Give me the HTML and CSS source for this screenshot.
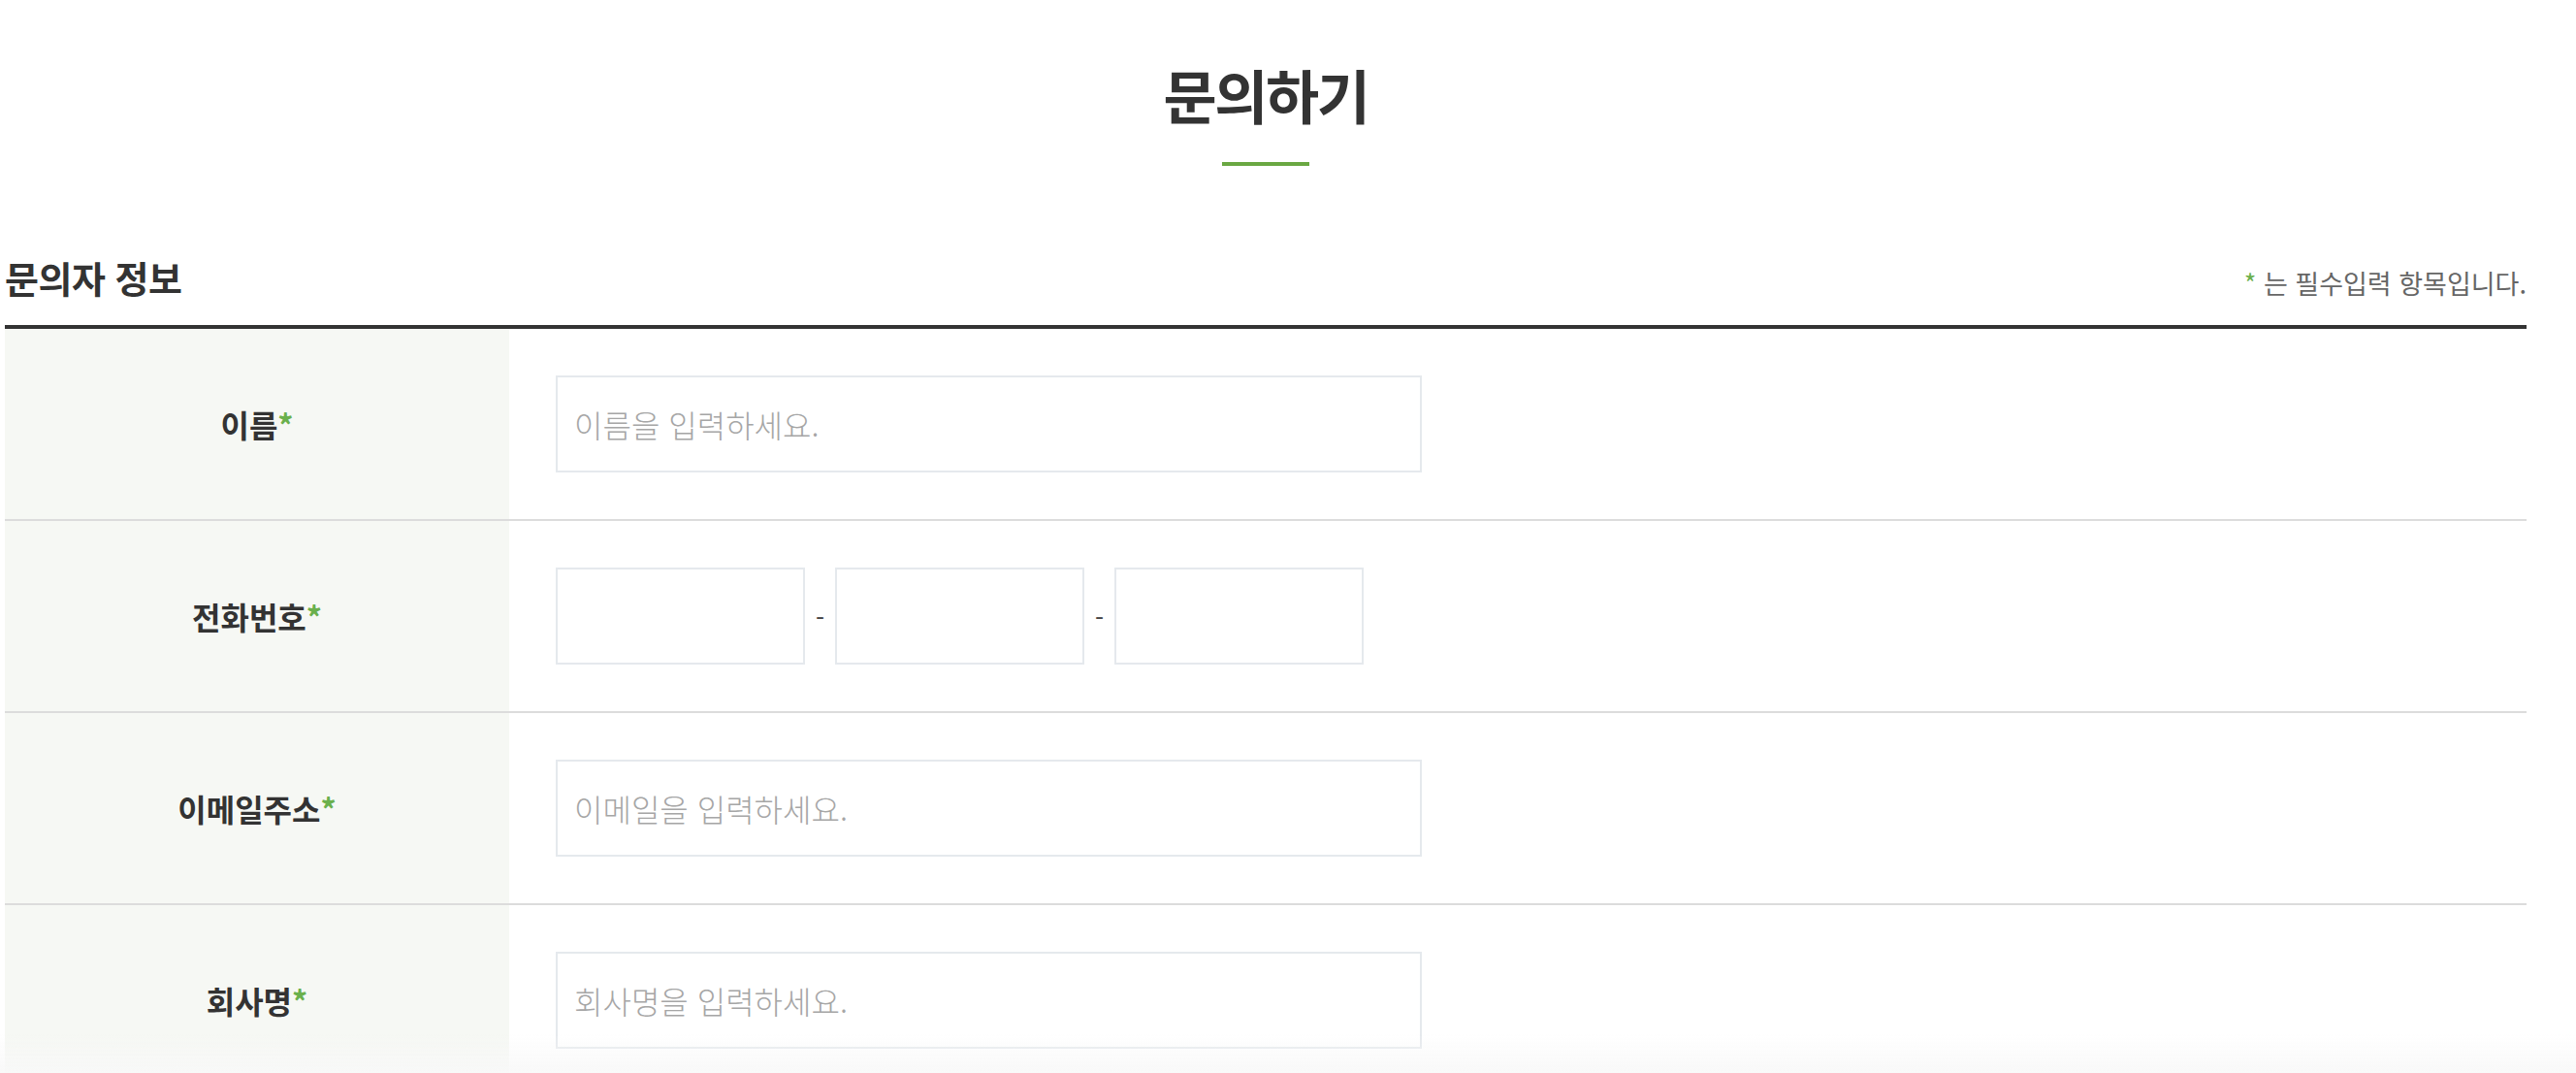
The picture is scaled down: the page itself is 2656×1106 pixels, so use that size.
FILE: index.html
```html
<!DOCTYPE html>
<html lang="ko">
<head>
<meta charset="utf-8">
<title>문의하기</title>
<link rel="stylesheet" href="styles.css">
</head>
<body>
<div class="wrap">
  <h1 class="page-title">문의하기</h1>
  <div class="title-bar"></div>

  <div class="section-head">
    <h2 class="section-title">문의자 정보</h2>
    <p class="req-note"><span class="star">*</span> 는 필수입력 항목입니다.</p>
  </div>

  <div class="form-table">
    <div class="row">
      <div class="label">이름<span class="star">*</span></div>
      <div class="field"><input class="text-input" type="text" placeholder="이름을 입력하세요."></div>
    </div>
    <div class="row">
      <div class="label">전화번호<span class="star">*</span></div>
      <div class="field">
        <input class="phone-input" type="text">
        <span class="dash">-</span>
        <input class="phone-input" type="text">
        <span class="dash">-</span>
        <input class="phone-input" type="text">
      </div>
    </div>
    <div class="row">
      <div class="label">이메일주소<span class="star">*</span></div>
      <div class="field"><input class="text-input" type="text" placeholder="이메일을 입력하세요."></div>
    </div>
    <div class="row">
      <div class="label">회사명<span class="star">*</span></div>
      <div class="field"><input class="text-input" type="text" placeholder="회사명을 입력하세요."></div>
    </div>
  </div>
</div>
<div class="bottom-fade"></div>
</body>
</html>
```

FILE: styles.css
```css
* { box-sizing: border-box; }

body {
  margin: 0;
  background: #ffffff;
  color: #333333;
  font-family: "Noto Sans CJK KR", "Noto Sans", sans-serif;
}

.wrap {
  width: 2600px;
  margin-left: 5px;
  padding-top: 67px;
}

.page-title {
  margin: 0;
  font-size: 60px;
  line-height: 60px;
  font-weight: 700;
  text-align: center;
  letter-spacing: -2.5px;
  color: #333333;
}

.title-bar {
  width: 90px;
  height: 4px;
  margin: 40px auto 0;
  background: #6aa842;
}

.section-head {
  display: flex;
  justify-content: space-between;
  align-items: flex-end;
  margin-top: 96px;
  padding-bottom: 30px;
  border-bottom: 4px solid #333333;
}

.section-title {
  margin: 0;
  font-size: 38px;
  line-height: 38px;
  font-weight: 700;
  letter-spacing: -0.5px;
  color: #333333;
}

.req-note {
  margin: 0;
  padding-right: 0;
  font-size: 27px;
  line-height: 27px;
  font-weight: 400;
  letter-spacing: 0;
  color: #666666;
}

.star { color: #6ab04c; }

.row {
  display: grid;
  grid-template-columns: 520px 1fr;
  height: 198px;
  border-bottom: 2px solid #dcdcdc;
}

.label {
  display: flex;
  align-items: center;
  justify-content: center;
  background: #f6f8f4;
  font-size: 32px;
  font-weight: 700;
  letter-spacing: 0;
  color: #333333;
}

.field {
  display: flex;
  align-items: center;
  padding-left: 48px;
}

.text-input,
.phone-input {
  height: 100px;
  border: 2px solid #e5e9ed;
  background: #ffffff;
  outline: none;
  font-family: "Noto Sans CJK KR", "Noto Sans", sans-serif;
  font-size: 32px;
  font-weight: 300;
  letter-spacing: 0;
  color: #333333;
  padding: 0 17px;
}

.text-input { width: 893px; }
.phone-input { width: 257px; }

.text-input::placeholder { color: #a6a6a6; }

.dash {
  width: 31px;
  text-align: center;
  font-size: 26px;
  color: #444444;
}

.bottom-fade {
  position: fixed;
  left: 0;
  right: 0;
  bottom: 0;
  height: 40px;
  background: linear-gradient(to bottom, rgba(250,250,250,0), rgba(248,248,248,0.9));
  pointer-events: none;
}
```
